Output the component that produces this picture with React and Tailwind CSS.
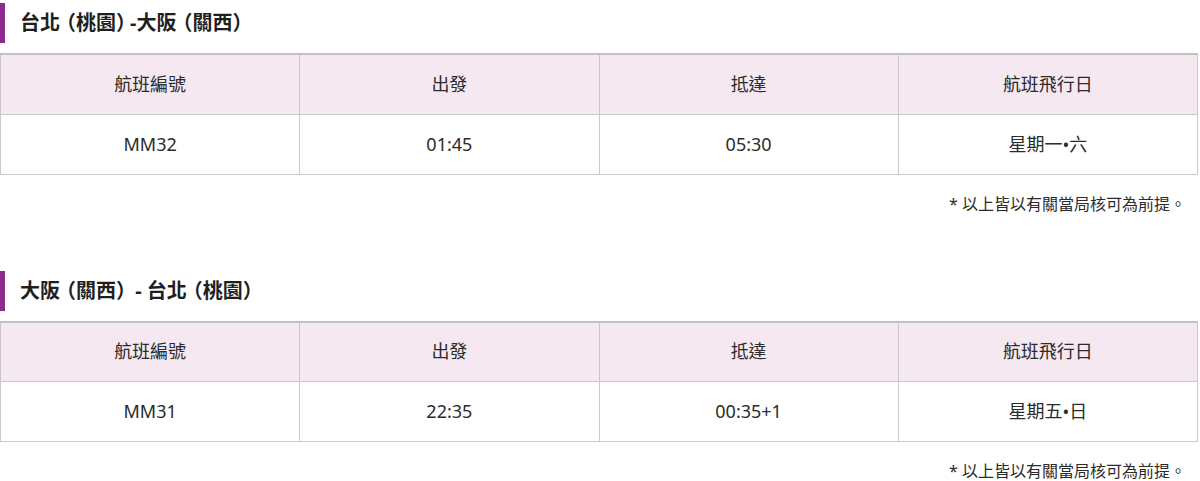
import React from "react";

const routes = [
  {
    title: ["台北", "（", "桃園", "）", "-大阪", "（", "關西", "）"],
    rows: [["MM32", "01:45", "05:30", "星期一•六"]],
  },
  {
    title: ["大阪", "（", "關西", "）", " - 台北", "（", "桃園", "）"],
    rows: [["MM31", "22:35", "00:35+1", "星期五•日"]],
  },
];

const headers = ["航班編號", "出發", "抵達", "航班飛行日"];

// half-width parens (halt) with a little air, like the original heading font
function TitlePart({ part }) {
  if (part === "（") return <span className="ml-[6px]">{part}</span>;
  if (part === "）") return <span className="mr-[4px]">{part}</span>;
  return <span>{part}</span>;
}

function RouteTable({ route, first }) {
  return (
    <section className={first ? "pt-[3px]" : "pt-[57px]"}>
      {/* Route title with purple bar */}
      <div className="flex items-center h-10 border-l-[5px] border-[#8f2a8c] pl-[15px]">
        <h2 className="text-[20px] font-bold text-[#1f1f1f] leading-none whitespace-pre [font-feature-settings:'halt']">
          {route.title.map((part, i) => (
            <TitlePart key={i} part={part} />
          ))}
        </h2>
      </div>

      {/* Flight table */}
      <table className="mt-[10px] w-[1198px] border-collapse table-fixed text-[18px] text-[#2b2b2b]">
        <thead>
          <tr className="bg-[#f6e8f1]">
            {headers.map((h) => (
              <th
                key={h}
                className="h-[60px] border border-[#c9c9c9] border-t-2 border-t-[#c4c0c3] font-normal text-center"
              >
                {h}
              </th>
            ))}
          </tr>
        </thead>
        <tbody>
          {route.rows.map((row, i) => (
            <tr key={i} className="bg-white">
              {row.map((cell, j) => (
                <td
                  key={j}
                  className="h-[60px] border border-[#c9c9c9] text-center"
                >
                  {cell}
                </td>
              ))}
            </tr>
          ))}
        </tbody>
      </table>

      <p className="mt-[19px] pr-[14px] text-right text-[16px] text-[#2b2b2b] leading-5">
        * 以上皆以有關當局核可為前提。
      </p>
    </section>
  );
}

export default function App() {
  return (
    <div
      className="w-[1200px] h-[481px] bg-white overflow-hidden"
      style={{ fontFamily: '"Noto Sans", "Noto Sans CJK TC", sans-serif' }}
    >
      {routes.map((route, i) => (
        <RouteTable key={i} route={route} first={i === 0} />
      ))}
    </div>
  );
}
